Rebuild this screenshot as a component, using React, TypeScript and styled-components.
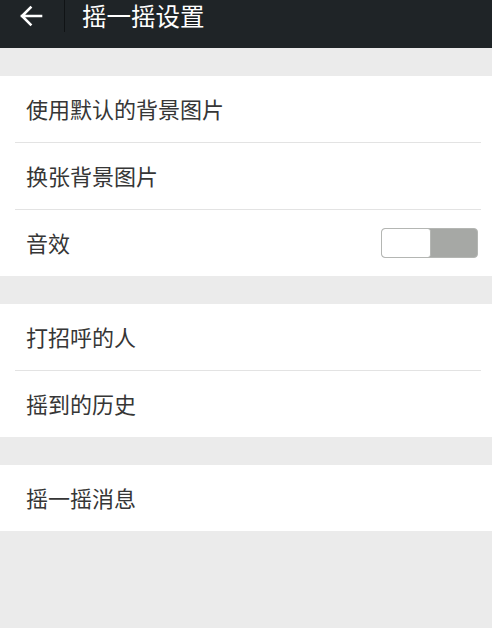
import styled, { createGlobalStyle } from "styled-components";

const GlobalStyle = createGlobalStyle`
  html, body {
    margin: 0;
    padding: 0;
    background: #ebebeb;
  }
  body {
    font-family: "Noto Sans CJK SC", "Noto Sans", sans-serif;
  }
`;

const Page = styled.div`
  width: 492px;
  min-height: 628px;
  background: #ebebeb;
  display: flex;
  flex-direction: column;
`;

const TopBar = styled.div`
  height: 48px;
  background: #1f2427;
  display: flex;
  align-items: flex-start;
`;

const BackButton = styled.div`
  width: 65px;
  height: 32px;
  display: flex;
  align-items: center;
  justify-content: center;
  border-right: 1px solid #101315;
  box-sizing: border-box;
  padding-right: 2px;
`;

const Title = styled.div`
  color: #ffffff;
  font-size: 24.5px;
  line-height: 32px;
  margin-left: 17px;
  padding-top: 0;
`;

const Group = styled.div`
  background: #ffffff;
  margin-top: 28px;
  display: flex;
  flex-direction: column;
`;

const Row = styled.div<{ $divider?: boolean }>`
  height: 66px;
  display: flex;
  align-items: center;
  justify-content: space-between;
  padding: 0 14px 0 26px;
  box-sizing: border-box;
  ${(p) =>
    p.$divider &&
    `
    height: 67px;
    border-bottom: 1px solid #e3e3e3;
    margin-left: 15px;
    margin-right: 11px;
    padding-left: 11px;
    padding-right: 3px;
  `}
`;

const Label = styled.span`
  font-size: 22px;
  color: #363636;
  margin-top: -2px;
`;

const Toggle = styled.div`
  width: 97px;
  height: 30px;
  border: 1.5px solid #b4b6b3;
  border-radius: 4px;
  background: #a6a8a5;
  box-sizing: border-box;
  display: flex;
  overflow: hidden;
`;

const Knob = styled.div`
  width: 48px;
  background: #ffffff;
  border-radius: 3px;
  border-right: 1px solid #b4b6b3;
`;

function Arrow() {
  return (
    <svg width="24" height="22" viewBox="0 0 24 22">
      <path
        d="M22 11H3M11.5 2.5L3 11l8.5 8.5"
        fill="none"
        stroke="#ffffff"
        strokeWidth="2.6"
        strokeLinecap="square"
      />
    </svg>
  );
}

export default function App() {
  return (
    <Page>
      <GlobalStyle />
      <TopBar>
        <BackButton>
          <Arrow />
        </BackButton>
        <Title>摇一摇设置</Title>
      </TopBar>
      <Group>
        <Row $divider>
          <Label>使用默认的背景图片</Label>
        </Row>
        <Row $divider>
          <Label>换张背景图片</Label>
        </Row>
        <Row>
          <Label>音效</Label>
          <Toggle>
            <Knob />
          </Toggle>
        </Row>
      </Group>
      <Group>
        <Row $divider>
          <Label>打招呼的人</Label>
        </Row>
        <Row>
          <Label>摇到的历史</Label>
        </Row>
      </Group>
      <Group>
        <Row>
          <Label>摇一摇消息</Label>
        </Row>
      </Group>
    </Page>
  );
}
